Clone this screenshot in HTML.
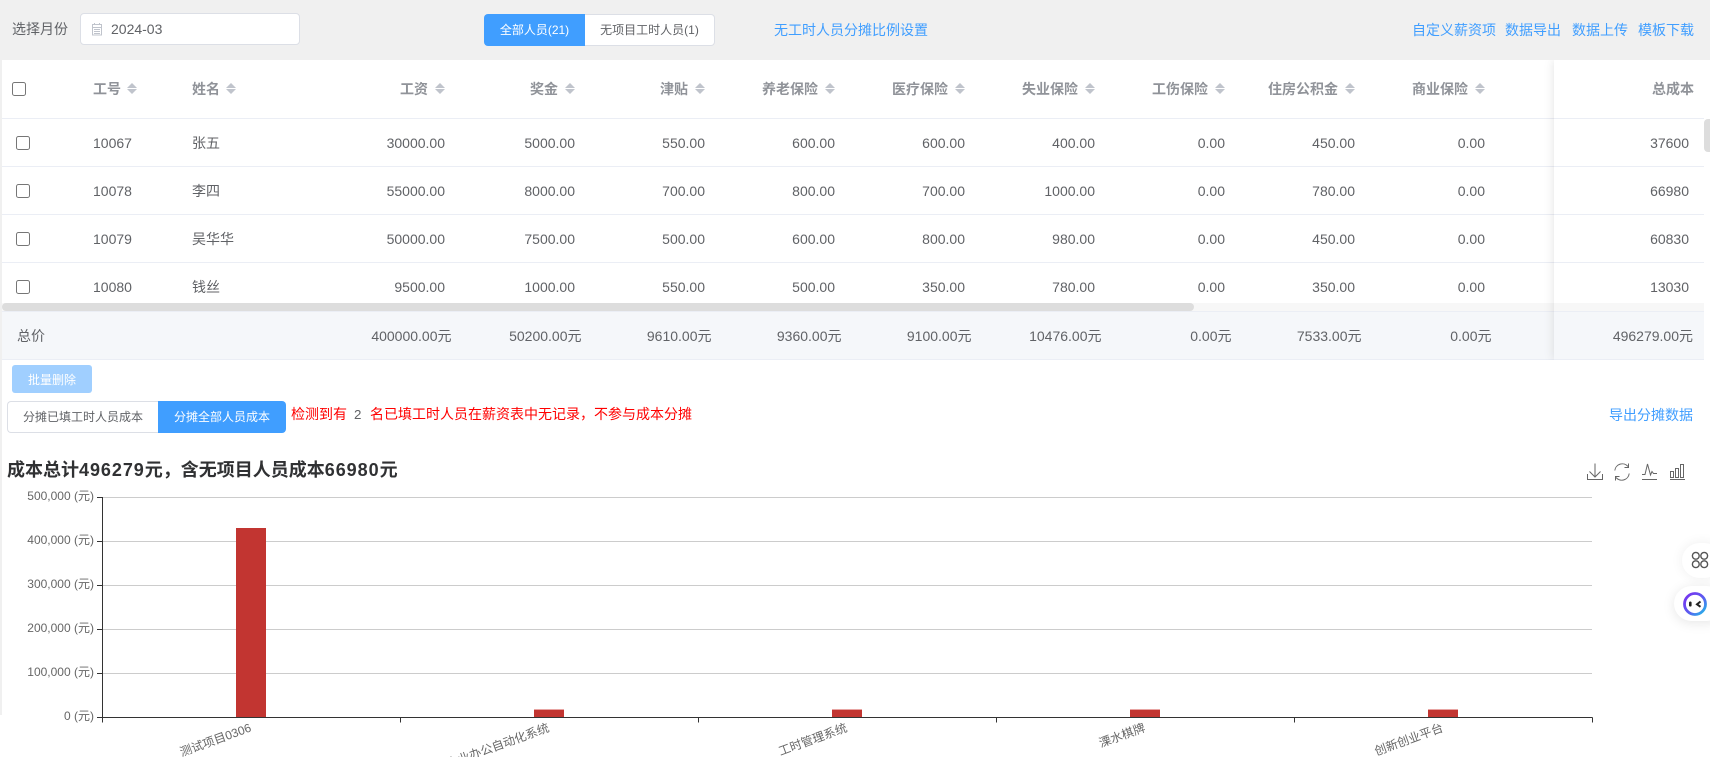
<!DOCTYPE html>
<html lang="zh-CN">
<head>
<meta charset="utf-8">
<title>薪资</title>
<style>
*{box-sizing:border-box}
html,body{margin:0;padding:0;width:1710px;height:766px;overflow:hidden;background:#fff}
body{position:relative;font-family:"Liberation Sans","Noto Sans CJK SC",sans-serif;font-size:14px;color:#606266}
.a{position:absolute;white-space:nowrap}
.link{color:#409eff;line-height:20px}
#top{left:0;top:0;width:1710px;height:60px;background:#f0f0f0}
#edge{left:0;top:60px;width:2px;height:655px;background:#f0f0f0}
.row{position:absolute;left:2px;width:1702px;height:48px;border-bottom:1px solid #ebeef5;background:#fff;display:flex;align-items:center;padding-left:91px;line-height:20px}
.row span{display:block;flex:none;width:130px;text-align:right}
.row span.i{width:99px;text-align:left}
.row span.n{width:123px;text-align:left}
.hd{font-weight:bold;color:#909399;height:59px}
.hd span b{font-weight:bold}
.car{display:inline-block;position:relative;width:10px;height:11px;margin-left:7px;vertical-align:0}
.i .car,.n .car{margin-left:6px}
.car:before,.car:after{content:"";position:absolute;left:0;border-left:5px solid transparent;border-right:5px solid transparent}
.car:before{top:0;border-bottom:5px solid #c0c4cc}
.car:after{bottom:0;border-top:5px solid #c0c4cc}
input.cb{position:absolute;margin:0;width:14px;height:14px;appearance:none;-webkit-appearance:none;background:#fff;border:1px solid #767676;border-radius:2.5px}
#clip{position:absolute;left:0;top:60px;width:1704px;height:243px;overflow:hidden}
#track{left:2px;top:303px;width:1702px;height:8px;background:#f7f7f7}
#thumb{left:2px;top:303px;width:1192px;height:8px;background:#ddd;border-radius:4px}
#vthumb{left:1704px;top:119px;width:6px;height:33px;background:#ddd;border-radius:4px 0 0 4px}
#foot{position:absolute;left:2px;top:311px;width:1702px;height:49px;background:#f5f7fa;border-top:1px solid #ebeef5;border-bottom:1px solid #ebeef5;display:flex;align-items:center;padding-left:15px;line-height:20px}
#foot span{display:block;flex:none;width:130px;text-align:right}
#foot span.l{width:304.5px;text-align:left}
#fixed{left:1554px;top:60px;width:150px;height:300px;box-shadow:0 0 10px rgba(0,0,0,.12);pointer-events:none;clip-path:inset(0 0 0 -20px)}
.fx{position:absolute;left:1554px;width:150px;height:48px;border-bottom:1px solid #ebeef5;background:#fff;text-align:right;padding-right:15px;line-height:48px}
.seg{text-align:center;font-size:12px}
.d{letter-spacing:.95px}
</style>
</head>
<body>
<div class="a" id="top"></div>
<div class="a" id="edge"></div>

<div class="a" style="left:12px;top:19px;line-height:20px">选择月份</div>
<div class="a" style="left:80px;top:13px;width:220px;height:32px;background:#fff;border:1px solid #dcdfe6;border-radius:4px"></div>
<svg class="a" style="left:91px;top:23px" width="12" height="13" viewBox="0 0 12 13" fill="none" stroke="#c0c4cc"><rect x="1.5" y="1.5" width="9" height="10.5"/><path d="M1.5 4.5h9M3 6.5h6M3 8.5h6M3 10.5h6M3.5 0v2M8.500 0v2"/></svg>
<div class="a" style="left:111px;top:19px;line-height:20px">2024-03</div>

<div class="a seg" style="left:484px;top:14px;width:101px;height:32px;line-height:32px;background:#409eff;color:#fff;border-radius:4px 0 0 4px">全部人员(21)</div>
<div class="a seg" style="left:585px;top:14px;width:130px;height:32px;line-height:30px;background:#fff;border:1px solid #dcdfe6;border-left:0;border-radius:0 4px 4px 0">无项目工时人员(1)</div>
<div class="a link" style="left:774px;top:20px">无工时人员分摊比例设置</div>
<div class="a link" style="left:1412px;top:20px">自定义薪资项</div>
<div class="a link" style="left:1505px;top:20px">数据导出</div>
<div class="a link" style="left:1572px;top:20px">数据上传</div>
<div class="a link" style="left:1638px;top:20px">模板下载</div>

<div class="row hd" style="top:60px"><span class="i"><b>工号</b><i class="car"></i></span><span class="n"><b>姓名</b><i class="car"></i></span><span><b>工资</b><i class="car"></i></span><span><b>奖金</b><i class="car"></i></span><span><b>津贴</b><i class="car"></i></span><span><b>养老保险</b><i class="car"></i></span><span><b>医疗保险</b><i class="car"></i></span><span><b>失业保险</b><i class="car"></i></span><span><b>工伤保险</b><i class="car"></i></span><span><b>住房公积金</b><i class="car"></i></span><span><b>商业保险</b><i class="car"></i></span></div>
<input class="cb" type="checkbox" style="left:12px;top:82px">

<div id="clip">
<div class="row" style="top:59px"><span class="i">10067</span><span class="n">张五</span><span>30000.00</span><span>5000.00</span><span>550.00</span><span>600.00</span><span>600.00</span><span>400.00</span><span>0.00</span><span>450.00</span><span>0.00</span></div>
<div class="row" style="top:107px"><span class="i">10078</span><span class="n">李四</span><span>55000.00</span><span>8000.00</span><span>700.00</span><span>800.00</span><span>700.00</span><span>1000.00</span><span>0.00</span><span>780.00</span><span>0.00</span></div>
<div class="row" style="top:155px"><span class="i">10079</span><span class="n">吴华华</span><span>50000.00</span><span>7500.00</span><span>500.00</span><span>600.00</span><span>800.00</span><span>980.00</span><span>0.00</span><span>450.00</span><span>0.00</span></div>
<div class="row" style="top:203px"><span class="i">10080</span><span class="n">钱丝</span><span>9500.00</span><span>1000.00</span><span>550.00</span><span>500.00</span><span>350.00</span><span>780.00</span><span>0.00</span><span>350.00</span><span>0.00</span></div>
</div>
<input class="cb" type="checkbox" style="left:16px;top:136px">
<input class="cb" type="checkbox" style="left:16px;top:184px">
<input class="cb" type="checkbox" style="left:16px;top:232px">
<input class="cb" type="checkbox" style="left:16px;top:280px">

<div class="a" id="track"></div>
<div class="a" id="thumb"></div>
<div id="foot"><span class="l">总价</span><span>400000.00元</span><span>50200.00元</span><span>9610.00元</span><span>9360.00元</span><span>9100.00元</span><span>10476.00元</span><span>0.00元</span><span>7533.00元</span><span>0.00元</span></div>

<div class="a" id="fixed"></div>
<div class="a" style="left:1554px;top:60px;width:150px;height:59px;background:#fff;border-bottom:1px solid #ebeef5"></div>
<div class="a" style="left:1554px;top:79px;width:156px;padding-right:16px;text-align:right;font-weight:bold;color:#909399;line-height:20px">总成本</div>
<div class="fx" style="top:119px">37600</div>
<div class="fx" style="top:167px">66980</div>
<div class="fx" style="top:215px">60830</div>
<div class="fx" style="top:263px;height:40px;border:0">13030</div>
<div class="a" style="left:1554px;top:311px;width:150px;height:49px;background:#f5f7fa;border-top:1px solid #ebeef5;border-bottom:1px solid #ebeef5;text-align:right;padding-right:11px;line-height:48px">496279.00元</div>
<div class="a" id="vthumb"></div>

<div class="a" style="left:12px;top:365px;width:80px;height:28px;background:#a0cfff;border-radius:3px;color:#fff;font-size:12px;line-height:30px;text-align:center">批量删除</div>
<div class="a seg" style="left:7px;top:401px;width:151px;height:32px;line-height:30px;background:#fff;border:1px solid #dcdfe6;border-right:0;border-radius:4px 0 0 4px">分摊已填工时人员成本</div>
<div class="a seg" style="left:158px;top:401px;width:128px;height:32px;line-height:32px;background:#409eff;color:#fff;border-radius:0 4px 4px 0">分摊全部人员成本</div>
<div class="a" style="left:291px;top:404px;line-height:20px;font-size:14px;color:#f00">检测到有</div>
<div class="a" style="left:354px;top:405px;line-height:20px;font-size:13.333px;color:#606266">2</div>
<div class="a" style="left:370px;top:404px;line-height:20px;font-size:14px;color:#f00">名已填工时人员在薪资表中无记录，不参与成本分摊</div>
<div class="a link" style="left:1609px;top:405px">导出分摊数据</div>

<div class="a" style="left:7px;top:457px;font-size:18px;font-weight:bold;color:#303133;line-height:26px">成本总计<span class="d">496279</span>元，含无项目人员成本<span class="d">66980</span>元</div>

<svg class="a" style="left:0;top:450px" width="1710" height="307" viewBox="0 450 1710 307" font-family="'Liberation Sans','Noto Sans CJK SC',sans-serif" font-size="12">
<g stroke="#ccc" fill="none">
<path d="M102.500 497.500H1592M102.500 541.500H1592M102.500 585.500H1592M102.500 629.500H1592M102.500 673.500H1592"/>
</g>
<g fill="#c23531">
<rect x="236" y="528" width="30" height="189.500"/>
<rect x="534" y="710" width="30" height="7.500"/>
<rect x="832" y="710" width="30" height="7.500"/>
<rect x="1130" y="710" width="30" height="7.500"/>
<rect x="1428" y="710" width="30" height="7.500"/>
</g>
<g fill="#e8a5a3">
<rect x="534" y="709" width="30" height="1"/>
<rect x="832" y="709" width="30" height="1"/>
<rect x="1130" y="709" width="30" height="1"/>
<rect x="1428" y="709" width="30" height="1"/>
</g>
<g stroke="#333" fill="none">
<path d="M102.500 497V717.500"/>
<path d="M97 497.500H102.500M97 541.500H102.500M97 585.500H102.500M97 629.500H102.500M97 673.500H102.500M97 717.500H102.500"/>
<path d="M97 717.500H1592.500"/>
<path d="M102.500 717.500V722.500M400.500 717.500V722.500M698.500 717.500V722.500M996.500 717.500V722.500M1294.500 717.500V722.500M1592.500 717.500V722.500"/>
</g>
<g fill="#666" text-anchor="end">
<text x="94" y="500">500,000 (元)</text>
<text x="94" y="544">400,000 (元)</text>
<text x="94" y="588">300,000 (元)</text>
<text x="94" y="632">200,000 (元)</text>
<text x="94" y="676">100,000 (元)</text>
<text x="94" y="720">0 (元)</text>
<text transform="translate(252 731) rotate(-20)">测试项目0306</text>
<text transform="translate(550 731) rotate(-20)">企业办公自动化系统</text>
<text transform="translate(848 731) rotate(-20)">工时管理系统</text>
<text transform="translate(1146 731) rotate(-20)">溧水棋牌</text>
<text transform="translate(1444 731) rotate(-20)">创新创业平台</text>
</g>
<g fill="none" stroke="#666">
<path d="M1595 463.500V477M1589.500 471.500L1595 477L1600.500 471.500M1587.500 474V479.500H1602.500V474"/>
<path d="M1614.800 470.500A7.500 7.500 0 0 1 1628 466.500M1629.200 473.500A7.500 7.500 0 0 1 1616 477.500"/>
<path d="M1628.500 463.500V467.500H1624.500M1615.500 480.500V476.500H1619.500"/>
<path d="M1642 479.500H1657M1642 474.500H1645L1647.500 464L1650.500 475L1652 471.500L1653.500 473.500H1657"/>
<path d="M1670 479.500H1685M1670.500 471.500H1673.500V477.500H1670.500ZM1675.500 468.500H1678.500V477.500H1675.500ZM1680.500 464.500H1683.500V477.500H1680.500Z"/>
</g>
</svg>

<div class="a" style="left:1682px;top:543px;width:40px;height:35px;background:#fff;border-radius:18px;box-shadow:0 0 12px rgba(0,0,0,.07)"></div>
<svg class="a" style="left:1691px;top:551px" width="18" height="18" viewBox="0 0 18 18" fill="none" stroke="#555" stroke-width="1.400"><circle cx="4.800" cy="4.800" r="3.400"/><circle cx="13.200" cy="4.800" r="3.400"/><circle cx="4.800" cy="13.200" r="3.400"/><circle cx="13.200" cy="13.200" r="3.400"/></svg>
<div class="a" style="left:1674px;top:586px;width:50px;height:35px;background:#fff;border-radius:18px;box-shadow:0 2px 12px rgba(0,0,0,.1)"></div>
<svg class="a" style="left:1681px;top:590px" width="28" height="28" viewBox="0 0 28 28"><defs><linearGradient id="rg" x1="0" y1="0" x2="1" y2="1"><stop offset="0" stop-color="#7b2ff0"/><stop offset=".55" stop-color="#5b5cf0"/><stop offset="1" stop-color="#1fc0e8"/></linearGradient></defs><circle cx="14" cy="14" r="10.500" fill="#fff" stroke="url(#rg)" stroke-width="2.800"/><rect x="8" y="11.500" width="2.600" height="5" rx="1.300" fill="#222"/><path d="M19.500 11.500L16 14.300L19.500 16.800" fill="none" stroke="#222" stroke-width="2"/></svg>
</body>
</html>
